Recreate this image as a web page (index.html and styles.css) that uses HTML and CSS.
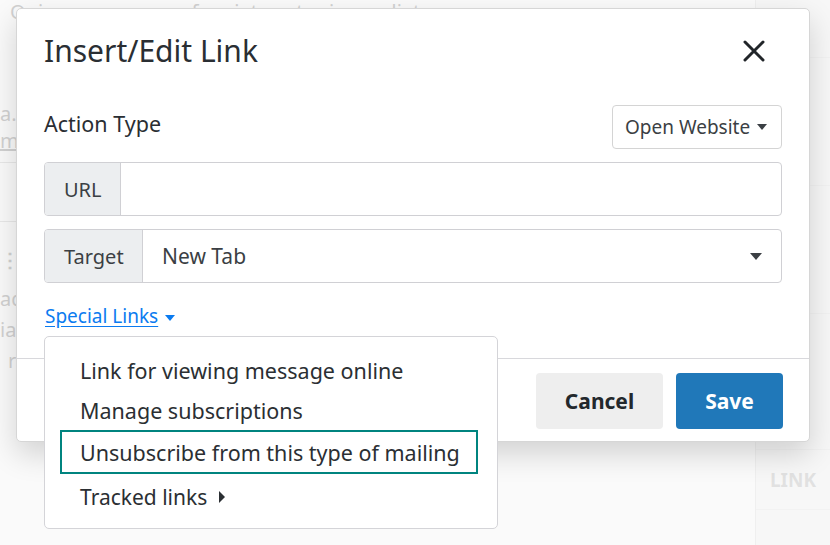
FILE: index.html
```html
<!DOCTYPE html>
<html>
<head>
<meta charset="utf-8">
<link rel="stylesheet" href="styles.css">
</head>
<body>
<div class="page">
  <div class="bg-main">
    <div class="bg-line1">Quisque arcu eros, feugiat auctor imperdiet</div>
    <div class="bg-left">
      <div class="bg-t1">a.</div>
      <div class="bg-t2">m</div>
      <div class="bg-box"></div>
      <div class="bg-t3">⋮</div>
      <div class="bg-t4">ad</div>
      <div class="bg-t5">ia</div>
      <div class="bg-t6">r</div>
    </div>
  </div>
  <div class="bg-side">
    <div class="side-cell c1">XT</div>
    <div class="side-cell c2">lo</div>
    <div class="side-cell c3">xt</div>
    <div class="side-cell c4">ne</div>
    <div class="side-cell c5">LINK</div>
  </div>
  <div class="backdrop"></div>

  <div class="modal">
    <div class="modal-header">
      <h4 class="modal-title">Insert/Edit Link</h4>
      <svg class="close" width="22" height="22" viewBox="0 0 22 22"><path d="M2 2 L20 20 M20 2 L2 20" stroke="#212529" stroke-width="3" stroke-linecap="round"/></svg>
    </div>
    <div class="modal-body">
      <div class="row-action">
        <span class="label">Action Type</span>
        <span class="btn-select">Open Website <i class="caret"></i></span>
      </div>
      <div class="input-group">
        <span class="addon url">URL</span>
        <span class="field"></span>
      </div>
      <div class="input-group">
        <span class="addon target">Target</span>
        <span class="field select">New Tab <i class="caret"></i></span>
      </div>
      <div class="special"><span class="link">Special Links</span> <i class="caret blue"></i></div>
    </div>
    <div class="modal-footer">
      <span class="btn cancel">Cancel</span>
      <span class="btn save">Save</span>
    </div>

    <div class="dropdown">
      <div class="item">Link for viewing message online</div>
      <div class="item">Manage subscriptions</div>
      <div class="item active">Unsubscribe from this type of mailing</div>
      <div class="item last">Tracked links <i class="caret-right"></i></div>
    </div>
  </div>
</div>
</body>
</html>
```

FILE: styles.css
```css
* { box-sizing: border-box; }
html, body { margin: 0; padding: 0; }
body {
  width: 830px;
  height: 545px;
  overflow: hidden;
  font-family: "Noto Sans", "Open Sans", sans-serif;
  color: #212529;
  background: #f4f4f4;
}
.page {
  position: relative;
  width: 830px;
  height: 545px;
  display: flex;
}
.bg-main {
  width: 755px;
  background: #f3f3f3;
  position: relative;
}
.bg-line1 {
  font-size: 20px;
  line-height: 24px;
  color: #9a9a9a;
  margin: 0 0 0 10px;
  white-space: nowrap;
}
.bg-left { position: relative; color: #9a9a9a; font-size: 20px; }
.bg-t1 { margin: 76px 0 0 0; }
.bg-t2 { text-decoration: underline; }
.bg-box { height: 60px; border-top: 1px solid #ccc; border-bottom: 1px solid #ccc; width: 16px; margin-top: 8px; }
.bg-t3 { font-weight: bold; margin-top: 24px; }
.bg-t4 { margin-top: 12px; }
.bg-t5 { margin-top: 4px; }
.bg-t6 { margin: 4px 0 0 8px; }
.bg-side {
  width: 75px;
  border-left: 1px solid #dcdcdc;
  background: #eeeeee;
  display: flex;
  flex-direction: column;
}
.side-cell {
  padding-left: 14px;
  font-weight: bold;
  font-size: 19px;
  line-height: 24px;
  color: #bdbdbd;
  border-bottom: 1px solid #e2e2e2;
  display: flex;
  align-items: center;
}
.side-cell.c1 { height: 58px; }
.side-cell.c2 { height: 128px; }
.side-cell.c3 { height: 128px; }
.side-cell.c4 { height: 136px; }
.side-cell.c5 { height: 60px; }
.backdrop {
  position: absolute;
  inset: 0;
  background: rgba(255, 255, 255, 0.55);
}

.modal {
  position: absolute;
  left: 16px;
  top: 8px;
  width: 794px;
  background: #fff;
  border: 1px solid #d6d6d6;
  border-radius: 5px;
  box-shadow: 0 12px 30px rgba(0, 0, 0, 0.16);
}
.modal-header {
  display: flex;
  align-items: center;
  justify-content: space-between;
  padding: 0 44px 0 27px;
  height: 84px;
}
.modal-title {
  margin: 0;
  font-weight: 400;
  font-size: 30px;
  line-height: 40px;
  color: #2a2e33;
}
.close { margin-top: 0; }
.modal-body {
  padding: 12px 27px 30px 27px;
}
.row-action {
  display: flex;
  justify-content: space-between;
  align-items: center;
  margin-bottom: 13px;
}
.label { font-size: 21.5px; margin-top: -8px; color: #2a2e33; }
.btn-select {
  display: inline-flex;
  align-items: center;
  justify-content: space-between;
  width: 170px;
  height: 44px;
  padding: 0 14px 0 12px;
  border: 1px solid #d4d4d4;
  border-radius: 4px;
  font-size: 19px;
  color: #3b3f44;
}
.caret {
  display: inline-block;
  width: 0; height: 0;
  border-left: 5.5px solid transparent;
  border-right: 5.5px solid transparent;
  border-top: 6px solid #3b3f44;
}
.field.select .caret { border-left-width: 6.5px; border-right-width: 6.5px; border-top-width: 7px; }
.caret.blue { border-top-color: #0b7bf0; vertical-align: middle; margin-left: 2px; }
.input-group {
  display: flex;
  height: 54px;
  border: 1px solid #d0d0d4;
  border-radius: 4px;
  margin-bottom: 13px;
  overflow: hidden;
}
.addon {
  display: flex;
  align-items: center;
  padding: 0 19px;
  background: #eceef0;
  border-right: 1px solid #d0d0d4;
  font-size: 20px;
  color: #3b3f44;
}
.addon.url { width: 76px; }
.addon.target { width: 98px; }
.field { flex: 1; display: flex; align-items: center; }
.field.select {
  padding: 0 19px;
  justify-content: space-between;
  font-size: 21px;
  color: #3b3f44;
}
.special {
  font-size: 19px;
  padding: 8px 0 0 1px;
  line-height: 24px;
}
.link { color: #0b7bf0; text-decoration: underline; text-underline-offset: 3px; }

.modal-footer {
  border-top: 1px solid #d8d8dc;
  display: flex;
  justify-content: flex-end;
  gap: 13px;
  padding: 14px 26px 12px;
}
.btn {
  display: inline-flex;
  align-items: center;
  justify-content: center;
  height: 56px;
  border-radius: 4px;
  font-weight: 700;
  font-size: 21px;
}
.cancel { width: 127px; background: #eeeeee; color: #23282c; }
.save { width: 107px; background: #2078b9; color: #fff; }

.dropdown {
  position: absolute;
  left: 27px;
  top: 327px;
  width: 454px;
  background: #fff;
  border: 1px solid #d4d4d8;
  border-radius: 5px;
  padding: 13px 0 8px 0;
}
.item {
  font-size: 21.5px;
  color: #2b2f33;
  padding-left: 18px;
  height: 40px;
  display: flex;
  align-items: center;
  margin: 0 19px 0 15px;
  border: 2px solid transparent;
}
.item.active { border-color: #00847f; height: 44px; }
.item.last { height: 46px; font-size: 21px; }
.caret-right {
  display: inline-block;
  width: 0; height: 0;
  border-top: 6px solid transparent;
  border-bottom: 6px solid transparent;
  border-left: 6px solid #2b2f33;
  margin-left: 12px;
}
```
